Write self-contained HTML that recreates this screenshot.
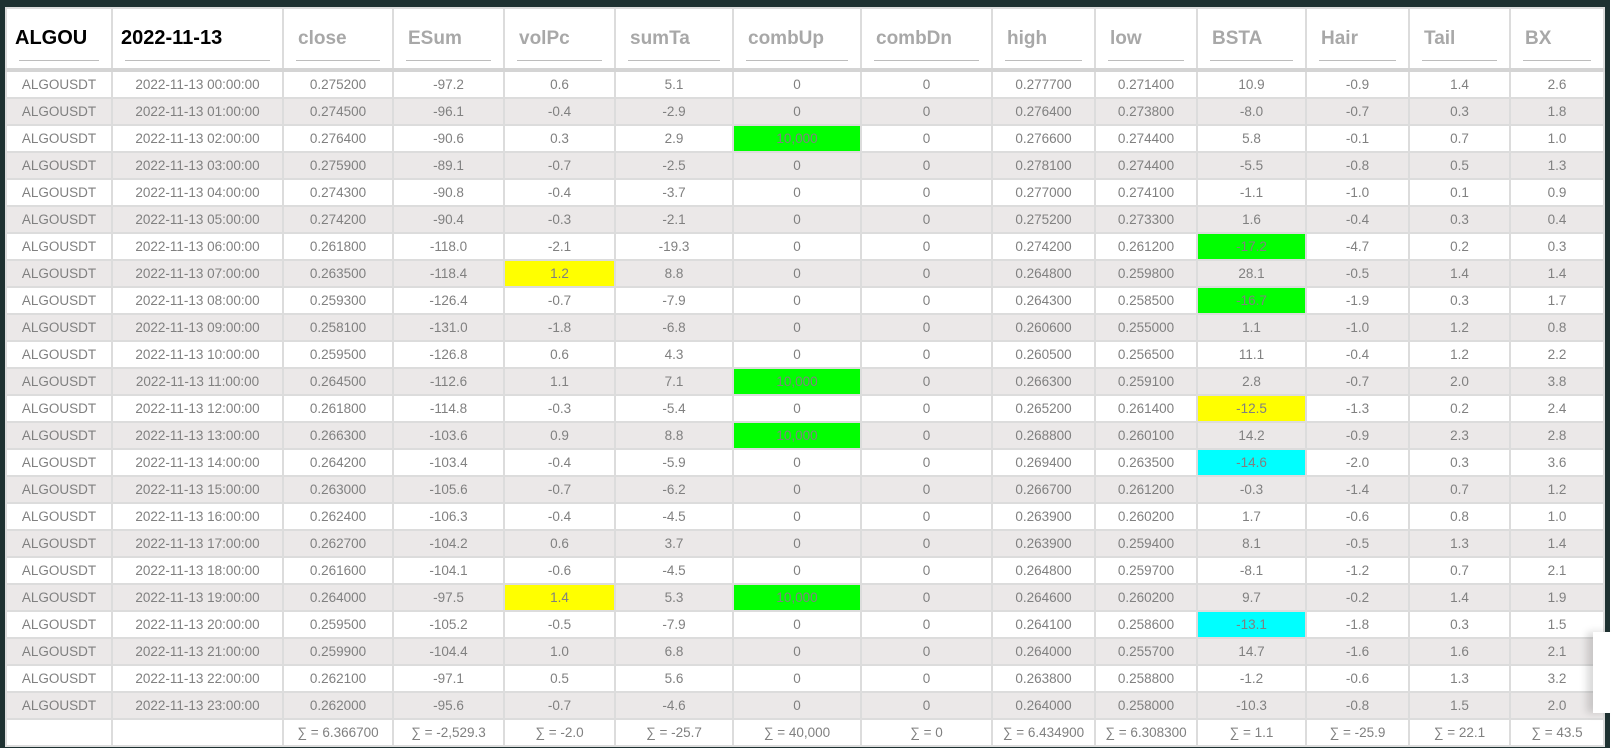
<!DOCTYPE html>
<html><head><meta charset="utf-8"><style>
html,body{margin:0;padding:0;width:1612px;height:752px;background:#fff;overflow:hidden}
.frame{position:absolute;left:0;top:0;width:1610px;height:748px;background:#1e3131}
table{position:absolute;left:5px;top:7px;border-collapse:collapse;table-layout:fixed;font-family:"Liberation Sans",sans-serif;background:#fff}
td,th{border:2px solid #dcdcdc;text-align:center;padding:0;overflow:hidden;white-space:nowrap}
th{height:59px;background:#fff;font-weight:bold;color:#a8a8a8;font-size:19px;text-align:left;padding-left:14px;position:relative;border-bottom:4px solid #d4d4d4}
th span{position:absolute;left:12px;right:12px;bottom:7px;border-bottom:1px solid #bdbdbd}
th.k{color:#000;font-size:20px;padding-left:8px}
td{height:25px;font-size:13.5px;color:#808080}
tr:nth-child(even) td{background:#ebe8e8}
td.g{background:#00ff00!important}
td.y{background:#ffff00!important}
td.c{background:#00ffff!important}
tr.s td{background:#fff!important;height:25px}
.ov{position:absolute;left:1593px;top:632px;width:19px;height:81px;background:#fff;box-shadow:-6px 0 8px rgba(0,0,0,.15)}
</style></head><body>
<div class="frame"></div>
<table>
<colgroup><col style="width:106px"><col style="width:171px"><col style="width:110px"><col style="width:111px"><col style="width:111px"><col style="width:118px"><col style="width:128px"><col style="width:131px"><col style="width:103px"><col style="width:102px"><col style="width:109px"><col style="width:103px"><col style="width:101px"><col style="width:94px"></colgroup>
<thead><tr><th class="k">ALGOU<span></span></th><th class="k">2022-11-13<span></span></th><th>close<span></span></th><th>ESum<span></span></th><th>volPc<span></span></th><th>sumTa<span></span></th><th>combUp<span></span></th><th>combDn<span></span></th><th>high<span></span></th><th>low<span></span></th><th>BSTA<span></span></th><th>Hair<span></span></th><th>Tail<span></span></th><th>BX<span></span></th></tr></thead>
<tbody>
<tr><td>ALGOUSDT</td><td>2022-11-13 00:00:00</td><td>0.275200</td><td>-97.2</td><td>0.6</td><td>5.1</td><td>0</td><td>0</td><td>0.277700</td><td>0.271400</td><td>10.9</td><td>-0.9</td><td>1.4</td><td>2.6</td></tr>
<tr><td>ALGOUSDT</td><td>2022-11-13 01:00:00</td><td>0.274500</td><td>-96.1</td><td>-0.4</td><td>-2.9</td><td>0</td><td>0</td><td>0.276400</td><td>0.273800</td><td>-8.0</td><td>-0.7</td><td>0.3</td><td>1.8</td></tr>
<tr><td>ALGOUSDT</td><td>2022-11-13 02:00:00</td><td>0.276400</td><td>-90.6</td><td>0.3</td><td>2.9</td><td class="g">10,000</td><td>0</td><td>0.276600</td><td>0.274400</td><td>5.8</td><td>-0.1</td><td>0.7</td><td>1.0</td></tr>
<tr><td>ALGOUSDT</td><td>2022-11-13 03:00:00</td><td>0.275900</td><td>-89.1</td><td>-0.7</td><td>-2.5</td><td>0</td><td>0</td><td>0.278100</td><td>0.274400</td><td>-5.5</td><td>-0.8</td><td>0.5</td><td>1.3</td></tr>
<tr><td>ALGOUSDT</td><td>2022-11-13 04:00:00</td><td>0.274300</td><td>-90.8</td><td>-0.4</td><td>-3.7</td><td>0</td><td>0</td><td>0.277000</td><td>0.274100</td><td>-1.1</td><td>-1.0</td><td>0.1</td><td>0.9</td></tr>
<tr><td>ALGOUSDT</td><td>2022-11-13 05:00:00</td><td>0.274200</td><td>-90.4</td><td>-0.3</td><td>-2.1</td><td>0</td><td>0</td><td>0.275200</td><td>0.273300</td><td>1.6</td><td>-0.4</td><td>0.3</td><td>0.4</td></tr>
<tr><td>ALGOUSDT</td><td>2022-11-13 06:00:00</td><td>0.261800</td><td>-118.0</td><td>-2.1</td><td>-19.3</td><td>0</td><td>0</td><td>0.274200</td><td>0.261200</td><td class="g">-17.2</td><td>-4.7</td><td>0.2</td><td>0.3</td></tr>
<tr><td>ALGOUSDT</td><td>2022-11-13 07:00:00</td><td>0.263500</td><td>-118.4</td><td class="y">1.2</td><td>8.8</td><td>0</td><td>0</td><td>0.264800</td><td>0.259800</td><td>28.1</td><td>-0.5</td><td>1.4</td><td>1.4</td></tr>
<tr><td>ALGOUSDT</td><td>2022-11-13 08:00:00</td><td>0.259300</td><td>-126.4</td><td>-0.7</td><td>-7.9</td><td>0</td><td>0</td><td>0.264300</td><td>0.258500</td><td class="g">-16.7</td><td>-1.9</td><td>0.3</td><td>1.7</td></tr>
<tr><td>ALGOUSDT</td><td>2022-11-13 09:00:00</td><td>0.258100</td><td>-131.0</td><td>-1.8</td><td>-6.8</td><td>0</td><td>0</td><td>0.260600</td><td>0.255000</td><td>1.1</td><td>-1.0</td><td>1.2</td><td>0.8</td></tr>
<tr><td>ALGOUSDT</td><td>2022-11-13 10:00:00</td><td>0.259500</td><td>-126.8</td><td>0.6</td><td>4.3</td><td>0</td><td>0</td><td>0.260500</td><td>0.256500</td><td>11.1</td><td>-0.4</td><td>1.2</td><td>2.2</td></tr>
<tr><td>ALGOUSDT</td><td>2022-11-13 11:00:00</td><td>0.264500</td><td>-112.6</td><td>1.1</td><td>7.1</td><td class="g">10,000</td><td>0</td><td>0.266300</td><td>0.259100</td><td>2.8</td><td>-0.7</td><td>2.0</td><td>3.8</td></tr>
<tr><td>ALGOUSDT</td><td>2022-11-13 12:00:00</td><td>0.261800</td><td>-114.8</td><td>-0.3</td><td>-5.4</td><td>0</td><td>0</td><td>0.265200</td><td>0.261400</td><td class="y">-12.5</td><td>-1.3</td><td>0.2</td><td>2.4</td></tr>
<tr><td>ALGOUSDT</td><td>2022-11-13 13:00:00</td><td>0.266300</td><td>-103.6</td><td>0.9</td><td>8.8</td><td class="g">10,000</td><td>0</td><td>0.268800</td><td>0.260100</td><td>14.2</td><td>-0.9</td><td>2.3</td><td>2.8</td></tr>
<tr><td>ALGOUSDT</td><td>2022-11-13 14:00:00</td><td>0.264200</td><td>-103.4</td><td>-0.4</td><td>-5.9</td><td>0</td><td>0</td><td>0.269400</td><td>0.263500</td><td class="c">-14.6</td><td>-2.0</td><td>0.3</td><td>3.6</td></tr>
<tr><td>ALGOUSDT</td><td>2022-11-13 15:00:00</td><td>0.263000</td><td>-105.6</td><td>-0.7</td><td>-6.2</td><td>0</td><td>0</td><td>0.266700</td><td>0.261200</td><td>-0.3</td><td>-1.4</td><td>0.7</td><td>1.2</td></tr>
<tr><td>ALGOUSDT</td><td>2022-11-13 16:00:00</td><td>0.262400</td><td>-106.3</td><td>-0.4</td><td>-4.5</td><td>0</td><td>0</td><td>0.263900</td><td>0.260200</td><td>1.7</td><td>-0.6</td><td>0.8</td><td>1.0</td></tr>
<tr><td>ALGOUSDT</td><td>2022-11-13 17:00:00</td><td>0.262700</td><td>-104.2</td><td>0.6</td><td>3.7</td><td>0</td><td>0</td><td>0.263900</td><td>0.259400</td><td>8.1</td><td>-0.5</td><td>1.3</td><td>1.4</td></tr>
<tr><td>ALGOUSDT</td><td>2022-11-13 18:00:00</td><td>0.261600</td><td>-104.1</td><td>-0.6</td><td>-4.5</td><td>0</td><td>0</td><td>0.264800</td><td>0.259700</td><td>-8.1</td><td>-1.2</td><td>0.7</td><td>2.1</td></tr>
<tr><td>ALGOUSDT</td><td>2022-11-13 19:00:00</td><td>0.264000</td><td>-97.5</td><td class="y">1.4</td><td>5.3</td><td class="g">10,000</td><td>0</td><td>0.264600</td><td>0.260200</td><td>9.7</td><td>-0.2</td><td>1.4</td><td>1.9</td></tr>
<tr><td>ALGOUSDT</td><td>2022-11-13 20:00:00</td><td>0.259500</td><td>-105.2</td><td>-0.5</td><td>-7.9</td><td>0</td><td>0</td><td>0.264100</td><td>0.258600</td><td class="c">-13.1</td><td>-1.8</td><td>0.3</td><td>1.5</td></tr>
<tr><td>ALGOUSDT</td><td>2022-11-13 21:00:00</td><td>0.259900</td><td>-104.4</td><td>1.0</td><td>6.8</td><td>0</td><td>0</td><td>0.264000</td><td>0.255700</td><td>14.7</td><td>-1.6</td><td>1.6</td><td>2.1</td></tr>
<tr><td>ALGOUSDT</td><td>2022-11-13 22:00:00</td><td>0.262100</td><td>-97.1</td><td>0.5</td><td>5.6</td><td>0</td><td>0</td><td>0.263800</td><td>0.258800</td><td>-1.2</td><td>-0.6</td><td>1.3</td><td>3.2</td></tr>
<tr><td>ALGOUSDT</td><td>2022-11-13 23:00:00</td><td>0.262000</td><td>-95.6</td><td>-0.7</td><td>-4.6</td><td>0</td><td>0</td><td>0.264000</td><td>0.258000</td><td>-10.3</td><td>-0.8</td><td>1.5</td><td>2.0</td></tr>
<tr class="s"><td></td><td></td><td>∑ = 6.366700</td><td>∑ = -2,529.3</td><td>∑ = -2.0</td><td>∑ = -25.7</td><td>∑ = 40,000</td><td>∑ = 0</td><td>∑ = 6.434900</td><td>∑ = 6.308300</td><td>∑ = 1.1</td><td>∑ = -25.9</td><td>∑ = 22.1</td><td>∑ = 43.5</td></tr>
</tbody></table>
<div class="ov"></div>
</body></html>
